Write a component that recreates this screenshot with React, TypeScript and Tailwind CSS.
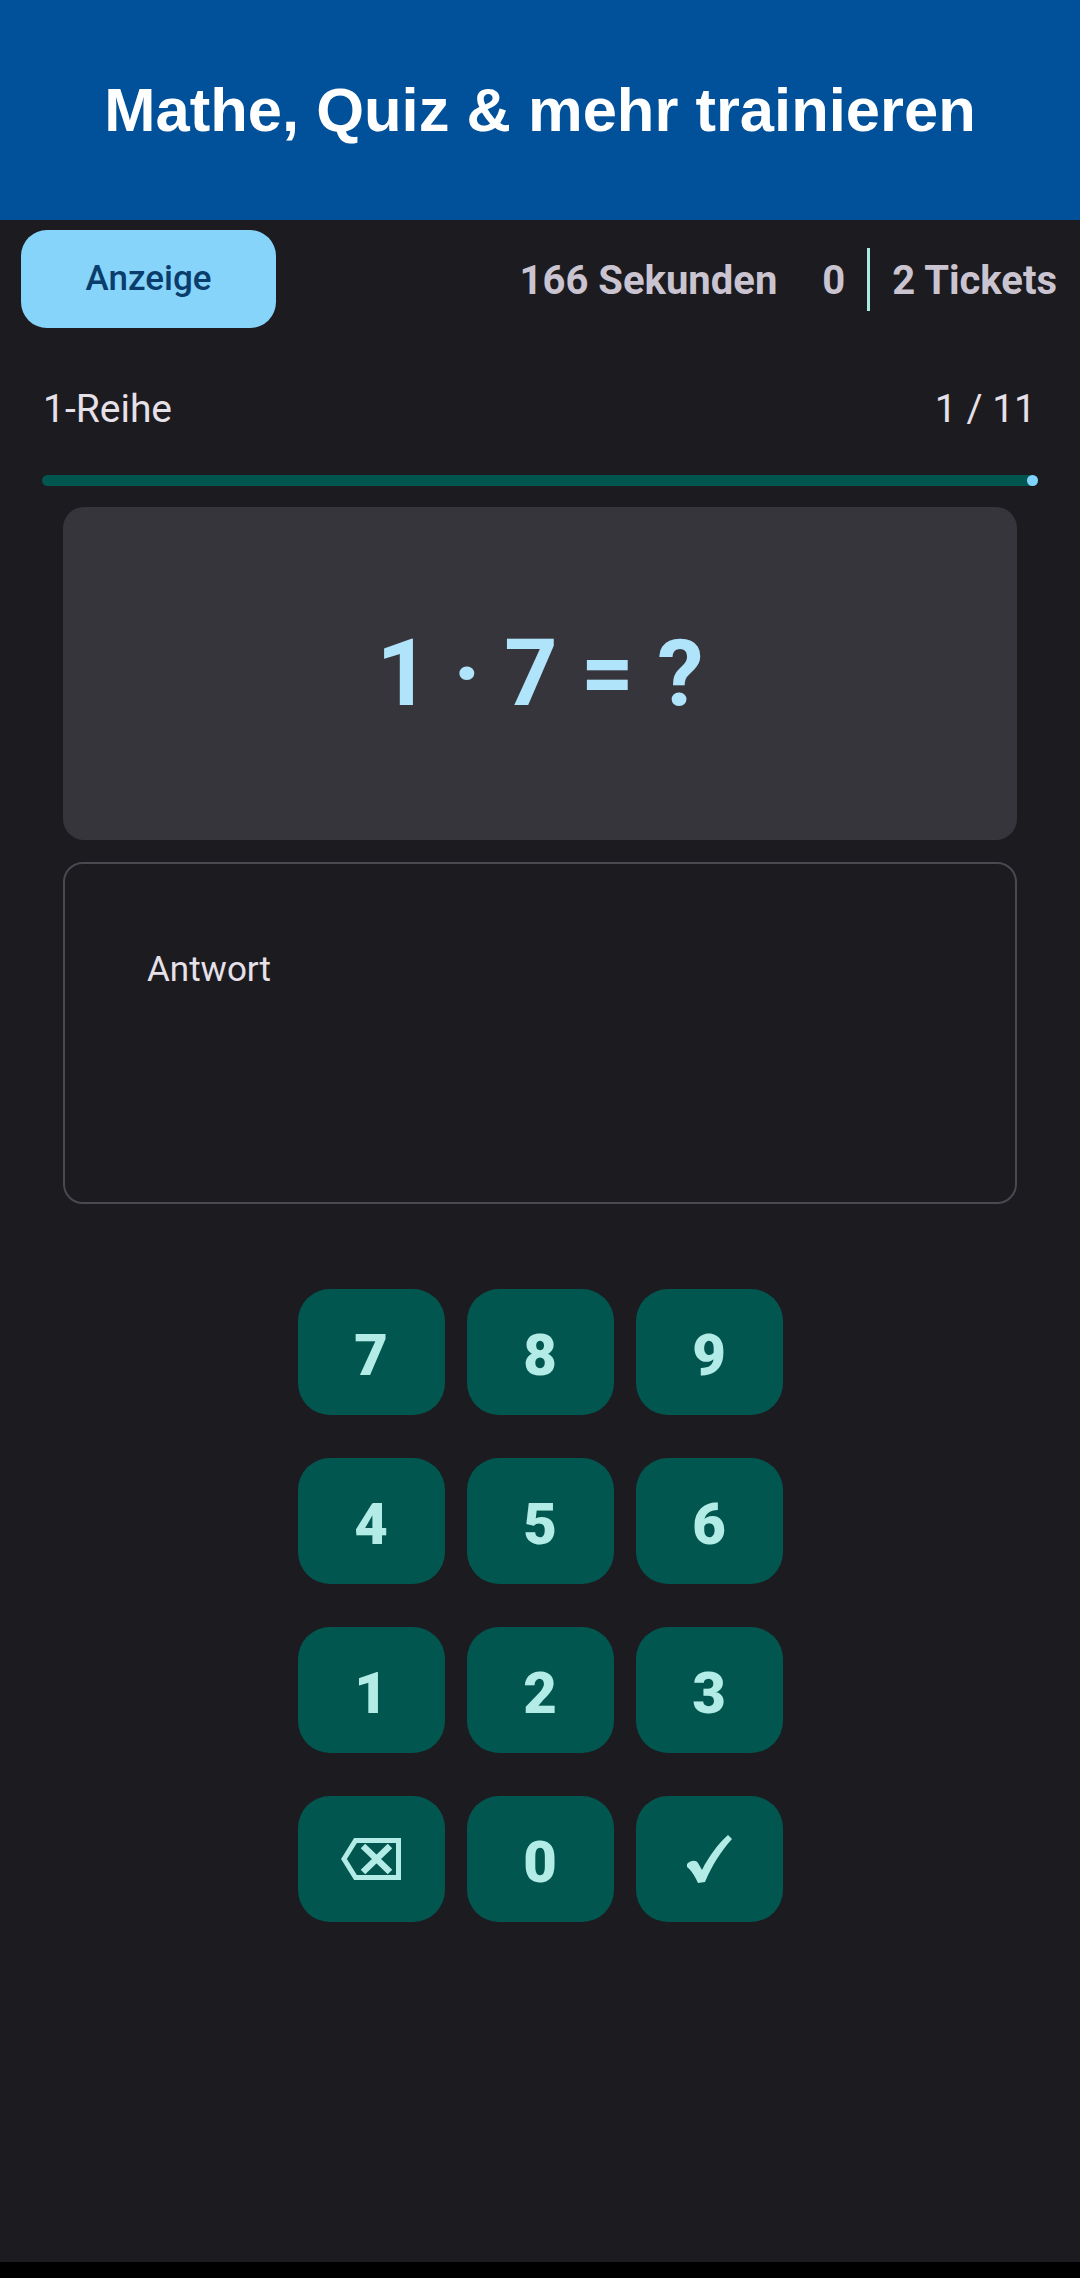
const KEYS = ["7", "8", "9", "4", "5", "6", "1", "2", "3", "back", "0", "ok"];

const BackspaceIcon = () => (
  <svg width="60" height="42" viewBox="0 0 60 42" fill="none" stroke="#b3ece7">
    <path d="M3 21 L14.5 2.5 H57.5 V39.5 H14.5 Z" strokeWidth="5" strokeLinejoin="miter" />
    <path d="M22 8 L49 34 M49 8 L22 34" strokeWidth="6.5" />
  </svg>
);

const CheckIcon = () => (
  <svg width="46" height="49" viewBox="0 0 46 49" fill="#b3ece7">
    <path d="M1 29 C5 25 10 25 12 28 L16 35 C23 21 32 9 42 0 L46 4 C36 15 26 30 19 47 L12 48 C9 41 5 35 1 32 Z" />
  </svg>
);

const Key = ({ k }: { k: string }) => {
  let label: React.ReactNode = <span className="mt-[6px]">{k}</span>;
  if (k === "back") label = <BackspaceIcon />;
  else if (k === "ok") label = <CheckIcon />;
  return (
    <button className="flex h-[126px] w-[147px] items-center justify-center rounded-[32px] bg-[#01574f] text-[58px] font-black leading-none text-[#b3ece7]">
      {label}
    </button>
  );
};

export default function App() {
  return (
    <div className="flex h-[2278px] w-[1080px] flex-col bg-[#1c1b20] font-['Roboto',sans-serif]">
      <header className="flex h-[220px] items-center justify-center bg-[#01509a]">
        <h1 className="font-['Liberation_Sans',Arial,sans-serif] text-[61.5px] font-bold leading-none text-white">
          Mathe, Quiz &amp; mehr trainieren
        </h1>
      </header>

      <div className="mt-[10px] flex h-[98px] items-center justify-between pl-[21px] pr-[23px]">
        <button className="flex h-[98px] w-[255px] items-center justify-center rounded-[26px] bg-[#86d4fa] text-[35px] font-medium text-[#0a3c6c]">
          Anzeige
        </button>
        <div className="flex items-center text-[40px] font-bold leading-none text-[#cac4d0]">
          <span className="pt-[4px]">166 Sekunden</span>
          <span className="ml-[45px] pt-[4px]">0</span>
          <span className="mx-[22px] h-[63px] w-[3px] bg-[#a8e9e3]"></span>
          <span className="pt-[4px]">2 Tickets</span>
        </div>
      </div>

      <div className="mt-[62px] flex items-center justify-between pl-[43px] pr-[44px] text-[39px] leading-none text-[#e6e0e9]">
        <span>1-Reihe</span>
        <span>1 / 11</span>
      </div>

      <div className="relative mx-[42px] mt-[46px] h-[11px] rounded-full bg-[#01574f]">
        <span className="absolute right-0 top-0 h-[11px] w-[11px] rounded-full bg-[#80d4fb]"></span>
      </div>

      <div className="mx-[63px] mt-[21px] flex h-[333px] items-center justify-center rounded-[21px] bg-[#36353b]">
        <span className="text-[93px] font-bold leading-none text-[#b0e4fb]">1 · 7 = ?</span>
      </div>

      <div className="mx-[63px] mt-[22px] h-[342px] rounded-[20px] border-2 border-[#4b4950] pl-[82px] pt-[88px]">
        <span className="text-[35px] leading-none text-[#e6e0e9]">Antwort</span>
      </div>

      <div className="mt-[85px] grid grid-cols-[147px_147px_147px] justify-center gap-x-[22px] gap-y-[43px]">
        {KEYS.map((k) => (
          <Key key={k} k={k} />
        ))}
      </div>

      <div className="flex-1"></div>
      <div className="h-[16px] bg-black"></div>
    </div>
  );
}
